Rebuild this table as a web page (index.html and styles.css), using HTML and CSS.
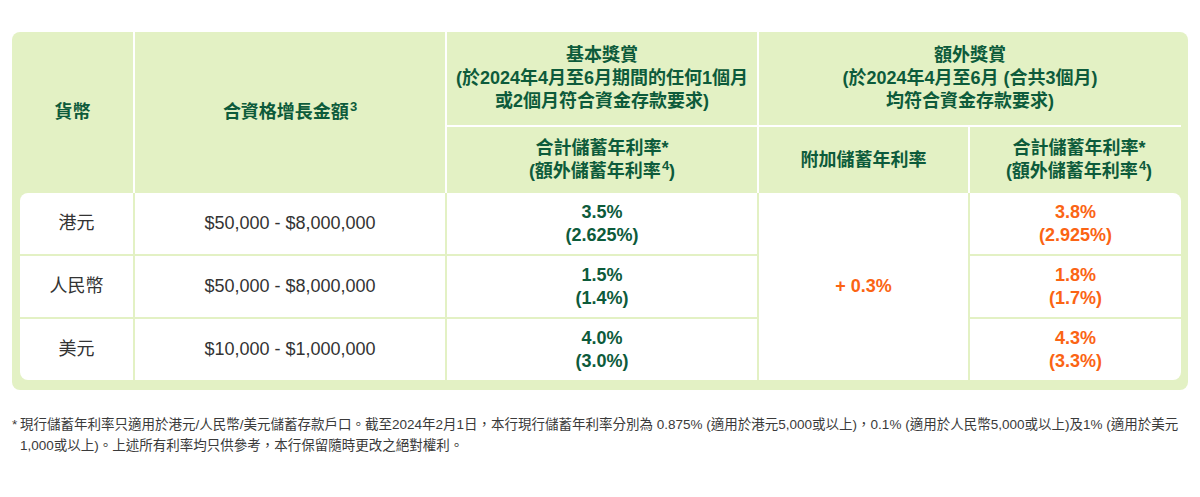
FILE: index.html
```html
<!DOCTYPE html>
<html lang="zh-Hant">
<head>
<meta charset="utf-8">
<title>儲蓄年利率</title>
<link rel="stylesheet" href="styles.css">
</head>
<body>
<div class="page">
  <div class="rates">
    <div class="th th-span2 col1"><div>貨幣</div></div>
    <div class="th th-span2 col2"><div>合資格增長金額<sup>3</sup></div></div>
    <div class="th group col3"><div>基本獎賞<br>(於2024年4月至6月期間的任何1個月<br>或2個月符合資金存款要求)</div></div>
    <div class="th group col45 last"><div>額外獎賞<br>(於2024年4月至6月 (合共3個月)<br>均符合資金存款要求)</div></div>
    <div class="th sub col3"><div>合計儲蓄年利率*<br>(額外儲蓄年利率<sup>4</sup>)</div></div>
    <div class="th sub col4"><div>附加儲蓄年利率</div></div>
    <div class="th sub col5 last"><div>合計儲蓄年利率*<br>(額外儲蓄年利率<sup>4</sup>)</div></div>

    <div class="td first-col r1 top"><div>港元</div></div>
    <div class="td r1"><div>$50,000 - $8,000,000</div></div>
    <div class="td rate r1"><div>3.5%<br>(2.625%)</div></div>
    <div class="td extra"><div>+ 0.3%</div></div>
    <div class="td rate orange last-col r1 top"><div>3.8%<br>(2.925%)</div></div>

    <div class="td first-col r2"><div>人民幣</div></div>
    <div class="td r2"><div>$50,000 - $8,000,000</div></div>
    <div class="td rate r2"><div>1.5%<br>(1.4%)</div></div>
    <div class="td rate orange last-col r2"><div>1.8%<br>(1.7%)</div></div>

    <div class="td first-col r3 bottom"><div>美元</div></div>
    <div class="td r3"><div>$10,000 - $1,000,000</div></div>
    <div class="td rate r3"><div>4.0%<br>(3.0%)</div></div>
    <div class="td rate orange last-col r3 bottom"><div>4.3%<br>(3.3%)</div></div>
  </div>

  <p class="note"><span class="star">*</span>現行儲蓄年利率只適用於港元/人民幣/美元儲蓄存款戶口。截至2024年2月1日，本行現行儲蓄年利率分別為 0.875% (適用於港元5,000或以上)，0.1% (適用於人民幣5,000或以上)及1% (適用於美元1,000或以上)。上述所有利率均只供參考，本行保留隨時更改之絕對權利。</p>
</div>
</body>
</html>
```

FILE: styles.css
```css
* {
  box-sizing: border-box;
}

html, body {
  margin: 0;
  background: #ffffff;
}

body {
  font-family: "Liberation Sans", "Noto Sans CJK TC", sans-serif;
  color: #333333;
}

.page {
  padding: 32px 12px 0;
}

.rates {
  display: grid;
  grid-template-columns: 123px 312px 312px 211px 218px;
  grid-template-rows: 95px 66px 63px 63px 61px;
  background: #e3f1c4;
  border-radius: 8px;
  padding-bottom: 10px;
}

.th,
.td {
  display: flex;
  align-items: center;
  justify-content: center;
  text-align: center;
  font-size: 18px;
  line-height: 23px;
}

.th {
  font-weight: bold;
  color: #0d5b3b;
  border-right: 2px solid #ffffff;
}

.th.last {
  border-right: none;
}

.th sup {
  font-size: 13px;
  line-height: 0;
  vertical-align: 7px;
  margin-left: 1px;
}

.th-span2 {
  grid-row: 1 / 3;
}

.col1 { grid-column: 1; }
.col2 { grid-column: 2; }
.col3 { grid-column: 3; }
.col4 { grid-column: 4; }
.col5 { grid-column: 5; }
.col45 { grid-column: 4 / 6; }

.group {
  grid-row: 1;
  border-bottom: 2px solid #ffffff;
}

.group.last {
  margin-right: 7px;
}

.sub {
  grid-row: 2;
}

.td {
  background: #ffffff;
  border-right: 2px solid #e3f1c4;
  line-height: 22.5px;
}

.r1, .r2 {
  border-bottom: 2px solid #e3f1c4;
}

.r1 { grid-row: 3; }
.r2 { grid-row: 4; }
.r3 { grid-row: 5; }

.first-col {
  grid-column: 1;
  margin-left: 8px;
}

.first-col.top { border-top-left-radius: 8px; }
.first-col.bottom { border-bottom-left-radius: 8px; }

.last-col {
  grid-column: 5;
  margin-right: 7px;
  border-right: none;
}

.last-col.top { border-top-right-radius: 8px; }
.last-col.bottom { border-bottom-right-radius: 8px; }

.rate {
  font-weight: bold;
  color: #0d5b3b;
}

.orange,
.extra {
  color: #fb6414;
}

.extra {
  grid-column: 4;
  grid-row: 3 / 6;
  font-weight: bold;
}

.note {
  margin: 24px 0 0;
  padding-left: 8px;
  text-indent: -8px;
  font-size: 13.5px;
  line-height: 21px;
  color: #3a3a3a;
}

.star {
  display: inline-block;
  width: 8px;
  text-indent: 0;
}
```
